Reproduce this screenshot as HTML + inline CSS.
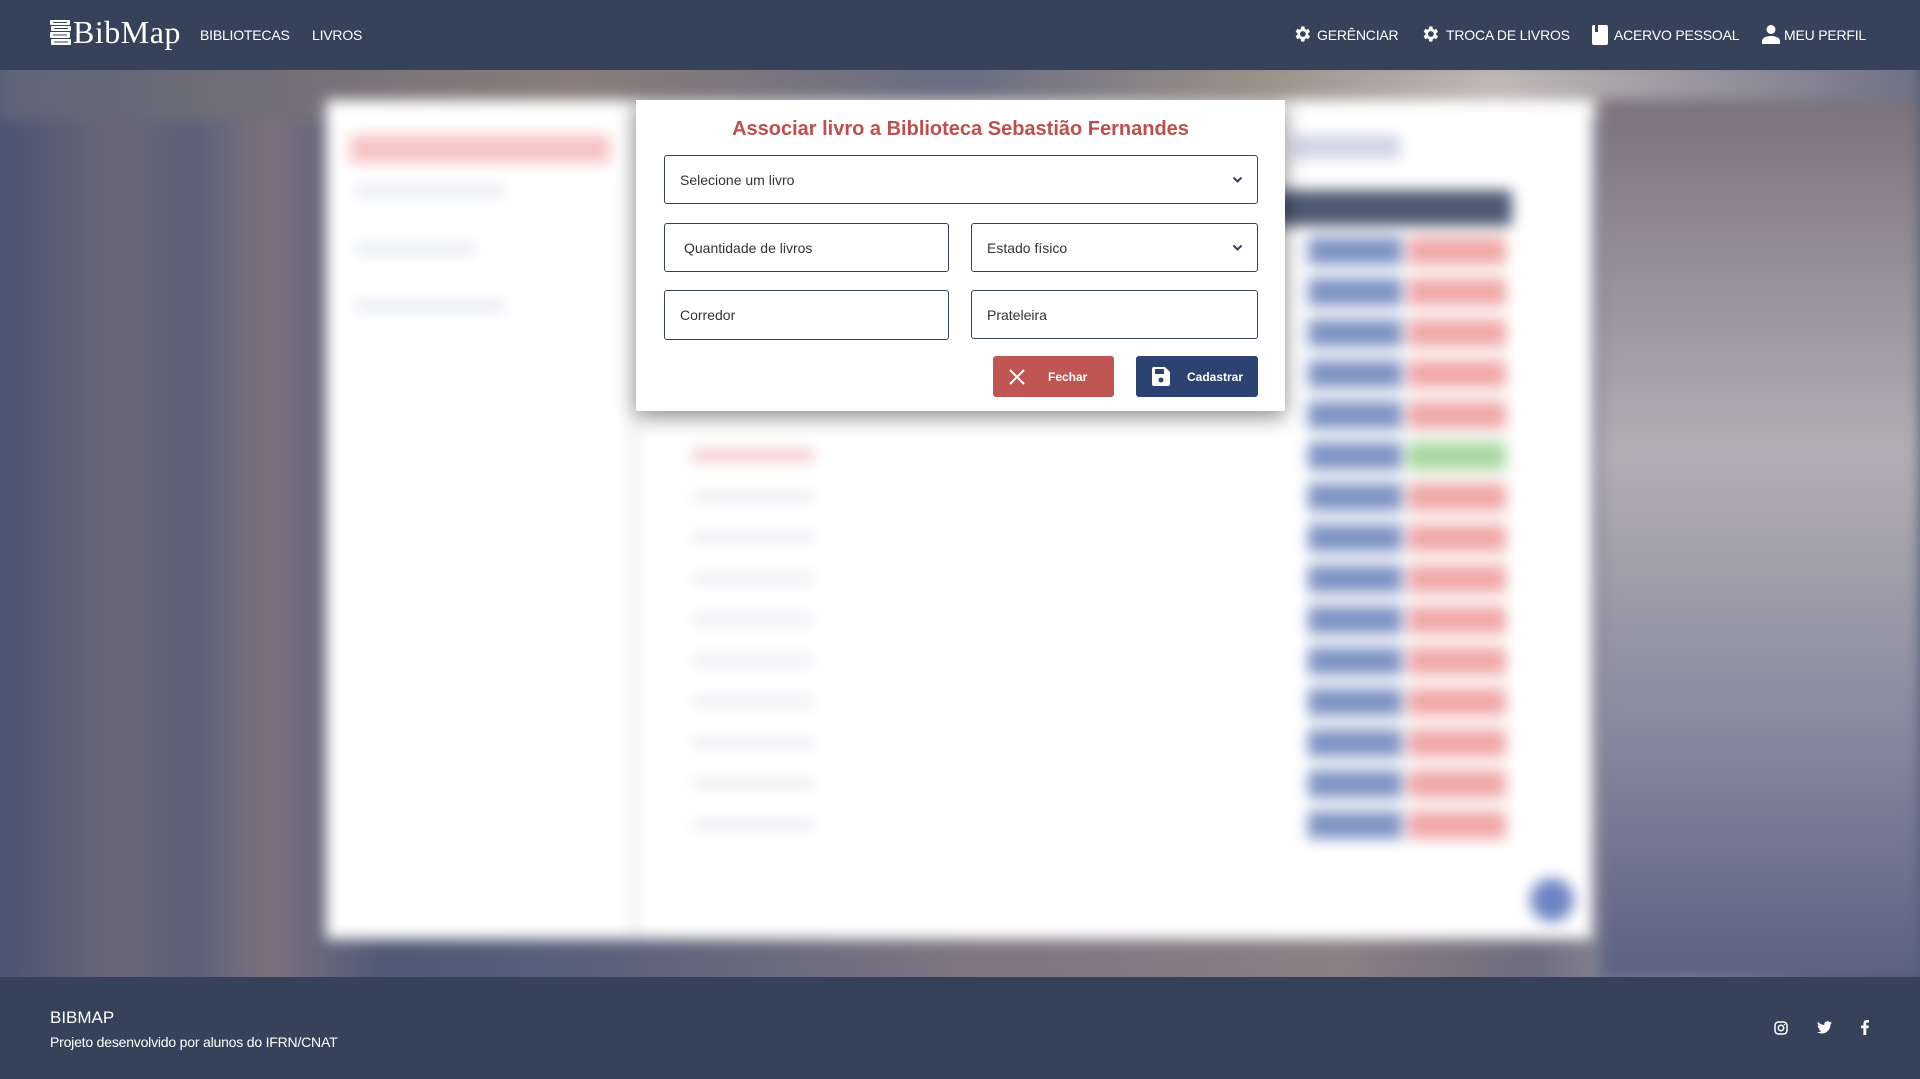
<!DOCTYPE html>
<html><head><meta charset="utf-8"><style>
*{box-sizing:border-box;margin:0;padding:0}
body{width:1920px;height:1079px;overflow:hidden;font-family:"Liberation Sans",Arial,sans-serif;background:#4f5a74;position:relative}
.bg{position:absolute;left:0;top:0;width:1920px;height:1079px;filter:blur(7px)}
.bg div{position:absolute}
nav{position:absolute;left:0;top:0;width:1920px;height:70px;background:#36425a;color:#fff}
nav .logo{position:absolute;left:73px;top:14px;font-family:"Liberation Serif","DejaVu Serif",serif;font-size:32px;letter-spacing:0.5px}
nav a{position:absolute;top:27px;font-size:14px;color:#fff;text-decoration:none;letter-spacing:-0.2px}
nav svg{position:absolute;top:24px}
footer{position:absolute;left:0;top:977px;width:1920px;height:102px;background:#36425a;color:#fff}
.modal{position:absolute;left:636px;top:100px;width:649px;height:311px;background:#fff;box-shadow:0 6px 20px rgba(0,0,0,.45)}
.f{position:absolute;border:1px solid #35425c;border-radius:3px;background:#fff;font-size:14px;color:#333;padding-left:15px;display:flex;align-items:center}
.chev{position:absolute;right:14px;top:50%;margin-top:-4px}
.btn{position:absolute;top:256px;height:41px;border-radius:3px;color:#fff;font-size:12px;font-weight:bold;display:flex;align-items:center}
</style></head><body>
<div class="bg">
  <div style="left:0;top:60px;width:1920px;height:930px;background:linear-gradient(90deg,#4a5470 0%,#6b6678 6%,#5b6077 10%,#7c7280 14%,#4f5975 20%,#58607a 30%,#7d7583 50%,#8a8083 70%,#6e6c80 80%,#a29fa8 88%,#5a6079 95%,#4c5672 100%)"></div>
  <div style="left:0;top:60px;width:1920px;height:60px;background:linear-gradient(90deg,#5e6478,#8a7d7a 30%,#6a6e84 50%,#9a8f88 65%,#bfb8b6 78%,#6f7086)"></div>
  <div style="left:1600px;top:100px;width:320px;height:880px;background:linear-gradient(180deg,#7a727c,#b2aeb4 40%,#8a8aa0 70%,#5a6280)"></div>
  <div style="left:326px;top:100px;width:1266px;height:839px;background:#fff"></div>
  <div style="left:630px;top:100px;width:8px;height:839px;background:#eceef1"></div>
  <div style="left:350px;top:135px;width:260px;height:28px;background:#f6c3c3"></div>
  <div style="left:1290px;top:135px;width:110px;height:24px;background:#cfd5e6"></div>
  <div style="left:355px;top:185px;width:150px;height:12px;background:#e8ebf2"></div>
  <div style="left:355px;top:243px;width:120px;height:12px;background:#e8ebf2"></div>
  <div style="left:355px;top:300px;width:150px;height:12px;background:#e8ebf2"></div>
  <div style="left:680px;top:190px;width:832px;height:36px;background:#4f5a72;border-radius:4px"></div>
  <div id="rows"></div>
  <div style="left:1530px;top:878px;width:44px;height:44px;border-radius:50%;background:#6f86c4"></div>
</div>
<script>
var h='';for(var i=0;i<15;i++){var y=237+i*41;var red=(i==5)?'#a8d7a0':'#f0a8a8';h+='<div style="left:1308px;top:'+y+'px;width:94px;height:28px;background:#7f93c4"></div><div style="left:1408px;top:'+y+'px;width:98px;height:28px;background:'+red+'"></div>';if(y>430)h+='<div style="left:692px;top:'+(y+8)+'px;width:122px;height:11px;background:'+(i==5?'#f4c4c4':'#eceef3')+'"></div>';}
document.getElementById('rows').innerHTML=h;
</script>
<nav>
  <svg style="left:50px;top:20px" width="22" height="26" viewBox="0 0 22 26"><g fill="#fff"><rect x="0" y="0" width="20" height="5" rx="1"/><rect x="1" y="6" width="20" height="5" rx="1"/><rect x="0" y="12" width="20" height="6" rx="1"/><rect x="1" y="19" width="20" height="6" rx="1"/></g><g stroke="#36425a" stroke-width="1"><path d="M3 2.5h14M4 8.5h14M3 15h14M4 22h14"/></g></svg>
  <div class="logo">BibMap</div>
  <a style="left:200px">BIBLIOTECAS</a>
  <a style="left:312px">LIVROS</a>
  <svg style="left:1292px" width="20" height="20" viewBox="0 0 24 24"><path fill="#fff" d="M19.4 13a7.5 7.5 0 000-2l2.1-1.6-2-3.5-2.5 1a7 7 0 00-1.7-1L15 3h-4l-.4 2.9a7 7 0 00-1.7 1l-2.5-1-2 3.5L6.5 11a7.5 7.5 0 000 2l-2.1 1.6 2 3.5 2.5-1a7 7 0 001.7 1L11 21h4l.4-2.9a7 7 0 001.7-1l2.5 1 2-3.5zM13 15.5a3.5 3.5 0 110-7 3.5 3.5 0 010 7z"/></svg>
  <a style="left:1317px">GERÊNCIAR</a>
  <svg style="left:1420px" width="20" height="20" viewBox="0 0 24 24"><path fill="#fff" d="M19.4 13a7.5 7.5 0 000-2l2.1-1.6-2-3.5-2.5 1a7 7 0 00-1.7-1L15 3h-4l-.4 2.9a7 7 0 00-1.7 1l-2.5-1-2 3.5L6.5 11a7.5 7.5 0 000 2l-2.1 1.6 2 3.5 2.5-1a7 7 0 001.7 1L11 21h4l.4-2.9a7 7 0 001.7-1l2.5 1 2-3.5zM13 15.5a3.5 3.5 0 110-7 3.5 3.5 0 010 7z"/></svg>
  <a style="left:1446px">TROCA DE LIVROS</a>
  <svg style="left:1591px" width="18" height="22" viewBox="0 0 18 22"><rect x="1" y="1" width="16" height="20" rx="2" fill="#fff"/><rect x="4" y="1" width="3" height="7" fill="#36425a"/></svg>
  <a style="left:1614px">ACERVO PESSOAL</a>
  <svg style="left:1762px" width="18" height="20" viewBox="0 0 18 20"><circle cx="9" cy="5.5" r="4.5" fill="#fff"/><path fill="#fff" d="M0 20v-3c0-3 4-5 9-5s9 2 9 5v3z"/></svg>
  <a style="left:1784px">MEU PERFIL</a>
</nav>
<div class="modal">
  <div style="position:absolute;left:0;width:100%;top:18px;text-align:center;font-size:20px;font-weight:bold;color:#bf4f4c">Associar livro a Biblioteca Sebastião Fernandes</div>
  <div class="f" style="left:28px;top:55px;width:594px;height:49px">Selecione um livro<svg class="chev" width="11" height="8" viewBox="0 0 11 8"><path d="M1.5 1.5l4 4 4-4" stroke="#35425c" stroke-width="2" fill="none"/></svg></div>
  <div class="f" style="left:28px;top:123px;width:285px;height:49px;padding-left:19px">Quantidade de livros</div>
  <div class="f" style="left:335px;top:123px;width:287px;height:49px">Estado físico<svg class="chev" width="11" height="8" viewBox="0 0 11 8"><path d="M1.5 1.5l4 4 4-4" stroke="#35425c" stroke-width="2" fill="none"/></svg></div>
  <div class="f" style="left:28px;top:190px;width:285px;height:50px">Corredor</div>
  <div class="f" style="left:335px;top:190px;width:287px;height:49px">Prateleira</div>
  <div class="btn" style="left:357px;width:121px;background:#c05654"><svg style="margin-left:15px" width="18" height="18" viewBox="0 0 18 18"><path d="M2 2l14 14M16 2L2 16" stroke="#fff" stroke-width="2"/></svg><span style="margin-left:22px">Fechar</span></div>
  <div class="btn" style="left:500px;width:122px;background:#2c4271"><svg style="margin-left:16px" width="18" height="19" viewBox="0 0 18 19"><path fill="#fff" d="M0 2a2 2 0 012-2h11l5 5v12a2 2 0 01-2 2H2a2 2 0 01-2-2z"/><rect x="3" y="2" width="9" height="5" fill="#2c4271"/><circle cx="9" cy="13" r="2.5" fill="#2c4271"/></svg><span style="margin-left:17px">Cadastrar</span></div>
</div>
<footer>
  <div style="position:absolute;left:50px;top:31px;font-size:17px">BIBMAP</div>
  <div style="position:absolute;left:50px;top:57px;font-size:14px;letter-spacing:-0.2px">Projeto desenvolvido por alunos do IFRN/CNAT</div>
  <svg style="position:absolute;left:1774px;top:44px" width="14" height="14" viewBox="0 0 14 14"><rect x="1" y="1" width="12" height="12" rx="3.5" stroke="#fff" stroke-width="1.5" fill="none"/><circle cx="7" cy="7" r="2.7" stroke="#fff" stroke-width="1.5" fill="none"/><circle cx="10.5" cy="3.5" r=".8" fill="#fff"/></svg>
  <svg style="position:absolute;left:1817px;top:44px" width="15" height="13" viewBox="0 0 24 20"><path fill="#fff" d="M24 2.4a10 10 0 01-2.8.8A5 5 0 0023.3.4a10 10 0 01-3.1 1.2A4.9 4.9 0 0011.8 6 14 14 0 011.7.9a4.9 4.9 0 001.5 6.6 4.9 4.9 0 01-2.2-.6 4.9 4.9 0 003.9 4.9 5 5 0 01-2.2.1 4.9 4.9 0 004.6 3.4A9.9 9.9 0 010 17.3 14 14 0 007.5 19.5c9.1 0 14-7.5 14-14v-.6A10 10 0 0024 2.4z"/></svg>
  <svg style="position:absolute;left:1861px;top:43px" width="8" height="15" viewBox="0 0 8 15"><path fill="#fff" d="M5.2 15V8.2h2.3l.3-2.7H5.2V3.8c0-.8.2-1.3 1.3-1.3H8V.1A19 19 0 005.9 0C3.8 0 2.4 1.3 2.4 3.6v1.9H0v2.7h2.4V15z"/></svg>
</footer>
</body></html>
